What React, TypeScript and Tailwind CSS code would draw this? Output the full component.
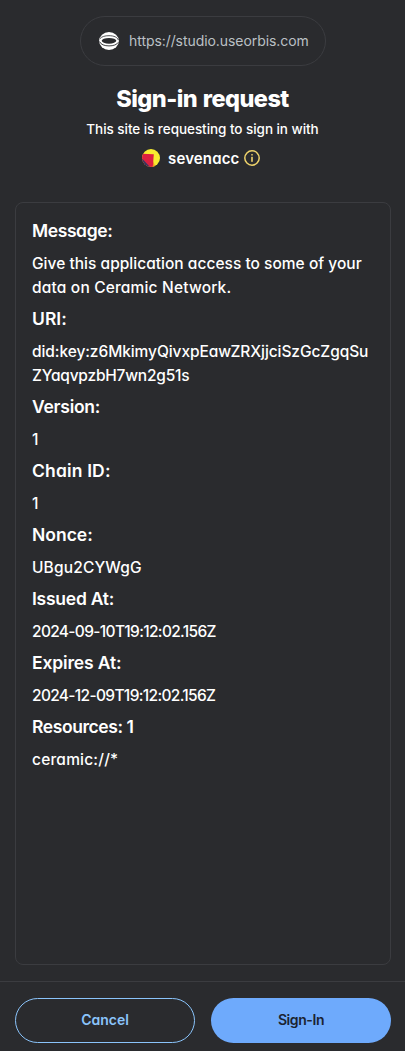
import React from "react";

type Field = { label: string; labelClass: string; lines: { text: string; cls: string }[] };

const fields: Field[] = [
  {
    label: "Message:",
    labelClass: "tracking-[-0.4px]",
    lines: [
      { text: "Give this application access to some of your", cls: "tracking-[0.02px]" },
      { text: "data on Ceramic Network.", cls: "tracking-[0.17px]" },
    ],
  },
  {
    label: "URI:",
    labelClass: "",
    lines: [
      { text: "did:key:z6MkimyQivxpEawZRXjjciSzGcZgqSu", cls: "tracking-[-0.08px]" },
      { text: "ZYaqvpzbH7wn2g51s", cls: "tracking-[-0.22px]" },
    ],
  },
  { label: "Version:", labelClass: "tracking-[-0.25px]", lines: [{ text: "1", cls: "" }] },
  { label: "Chain ID:", labelClass: "tracking-[0.15px]", lines: [{ text: "1", cls: "" }] },
  { label: "Nonce:", labelClass: "", lines: [{ text: "UBgu2CYWgG", cls: "tracking-[0.15px]" }] },
  {
    label: "Issued At:",
    labelClass: "tracking-[-0.25px]",
    lines: [{ text: "2024-09-10T19:12:02.156Z", cls: "tracking-[-0.67px]" }],
  },
  {
    label: "Expires At:",
    labelClass: "tracking-[-0.15px]",
    lines: [{ text: "2024-12-09T19:12:02.156Z", cls: "tracking-[-0.67px]" }],
  },
  {
    label: "Resources: 1",
    labelClass: "tracking-[-0.42px]",
    lines: [{ text: "ceramic://*", cls: "tracking-[0.2px]" }],
  },
];

function OrbisLogo() {
  return (
    <svg className="shrink-0" width="20" height="18" viewBox="0 0 20 18" fill="none">
      <ellipse cx="10" cy="9" rx="9.9" ry="9" fill="#fff" />
      <ellipse cx="10" cy="8.8" rx="7.300" ry="2.900" fill="#2a2b2e" />
      <path d="M1 6.600C2.800 4.500 6 3.700 10 3.700c5 0 8.500 1.600 9.300 4.300" stroke="#2a2b2e" strokeWidth=".8" />
      <path d="M.6 9.600C1.800 12.600 5.500 13.900 10 13.900s7.800-1.200 9.300-3.600" stroke="#2a2b2e" strokeWidth=".9" />
    </svg>
  );
}

function Avatar() {
  return (
    <svg className="shrink-0" width="18" height="18" viewBox="0 0 18 18">
      <defs>
        <clipPath id="avatar">
          <circle cx="9" cy="9" r="9" />
        </clipPath>
      </defs>
      <g clipPath="url(#avatar)">
        <rect width="18" height="18" fill="#f7ec30" />
        <path d="M10.500 18 11.300 12l2 6Z" fill="#f49b22" />
        <path d="M-1 4.600 11.800 5.300 10.800 18H-1Z" fill="#dc2040" />
        <path d="M-1 8.500 8 18H-1Z" fill="#36385f" />
      </g>
    </svg>
  );
}

function InfoIcon() {
  return (
    <svg className="shrink-0" width="16" height="16" viewBox="0 0 16 16" fill="none">
      <circle cx="8" cy="8" r="7.200" stroke="#eed36b" strokeWidth="1.500" />
      <rect x="7.200" y="6.800" width="1.600" height="5" fill="#eed36b" />
      <rect x="7.200" y="4" width="1.600" height="1.600" rx=".5" fill="#eed36b" />
    </svg>
  );
}

export default function App() {
  return (
    <div className="flex h-[1051px] w-[405px] flex-col bg-[#2a2b2e] font-['Inter','Liberation_Sans',sans-serif] font-medium text-white [font-feature-settings:'cv11','calt'_0]">
      <header className="flex flex-col items-center pt-4">
        <div className="ml-px flex h-[50px] w-[246px] items-center rounded-full border border-[#3b3c40] pl-[18px]">
          <OrbisLogo />
          <span className="ml-2.5 pb-0.5 text-[14px] font-normal tracking-[-0.07px] whitespace-nowrap text-[#bbc0c5]">
            https://studio.useorbis.com
          </span>
        </div>
        <h1 className="mt-[17px] text-[23.5px] leading-8 font-extrabold tracking-[-0.55px] whitespace-nowrap [word-spacing:1px]">
          Sign-in request
        </h1>
        <p className="mt-[3px] text-[13.5px] leading-[22px] tracking-[-0.05px] whitespace-nowrap">
          This site is requesting to sign in with
        </p>
        <div className="mt-[7px] flex h-[22px] w-[121px] items-center">
          <Avatar />
          <span className="ml-2 w-[76px] pt-0.5 text-[15px] font-semibold tracking-[0.15px]">sevenacc</span>
          <InfoIcon />
        </div>
      </header>
      <main className="mx-[15px] mt-[33px] h-[763px] w-[376px] shrink-0 rounded-lg border border-[#3b3c40] px-4 pt-3">
        {fields.map((f) => (
          <section key={f.label} className="pb-[3px]">
            <h2 className={`mb-[5px] text-[17.5px] leading-8 font-semibold whitespace-nowrap ${f.labelClass}`}>{f.label}</h2>
            {f.lines.map((l) => (
              <p key={l.text} className={`text-[15.5px] leading-6 whitespace-nowrap ${l.cls}`}>
                {l.text}
              </p>
            ))}
          </section>
        ))}
      </main>
      <footer className="mt-4 flex h-[70px] gap-4 border-t border-[#3b3c40] pt-4 pl-[15px]">
        <button className="h-[45px] w-[180px] shrink-0 rounded-full border border-[#8ac4fb] pb-0.5 text-[14px] font-semibold text-[#8ac4fb]">
          Cancel
        </button>
        <button className="h-[45px] w-[180px] shrink-0 rounded-full bg-[#6eaafc] pb-0.5 text-[14px] font-semibold tracking-[-0.4px] text-[#1b2330]">
          Sign-In
        </button>
      </footer>
    </div>
  );
}
